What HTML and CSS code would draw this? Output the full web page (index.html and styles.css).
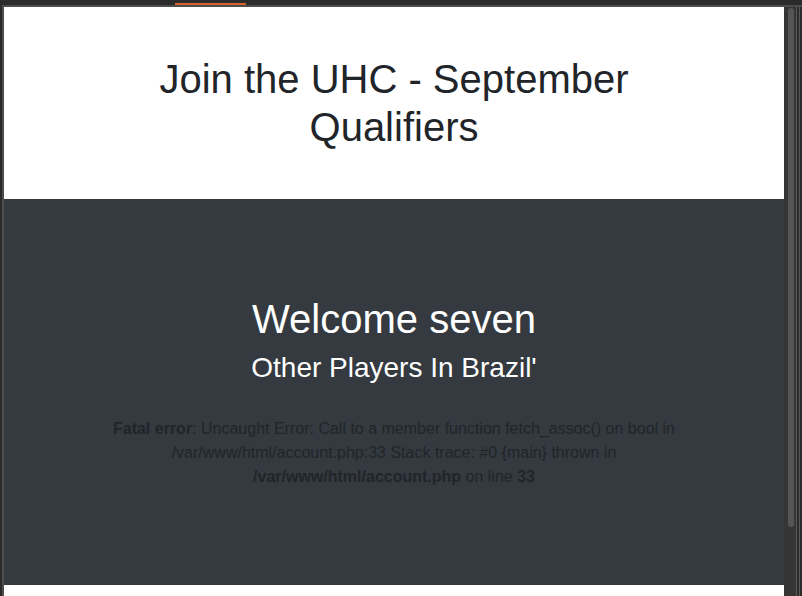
FILE: index.html
```html
<!DOCTYPE html>
<html>
<head>
<meta charset="utf-8">
<link rel="stylesheet" href="styles.css">
</head>
<body>
<div class="topbar"><span class="tab"></span></div>
<div class="window">
  <div class="page">
    <header class="hero">
      <h1 class="title">Join the UHC - September<br>Qualifiers</h1>
    </header>
    <section class="dark">
      <h1 class="welcome">Welcome seven</h1>
      <h3 class="sub">Other Players In Brazil'</h3>
      <div class="error"><br><b>Fatal error</b>: Uncaught Error: Call to a member function fetch_assoc() on bool in /var/www/html/account.php:33
Stack trace:
#0 {main}
  thrown in <b>/var/www/html/account.php</b> on line <b>33</b></div>
    </section>
    <section class="after"></section>
  </div>
  <div class="scrollbar"><div class="thumb"></div></div>
  <div class="edge"></div>
</div>
</body>
</html>
```
FILE: styles.css
```css
html, body {
  margin: 0;
  padding: 0;
  height: 100%;
  overflow: hidden;
}
body {
  background: #2b2b2b;
  font-family: "Liberation Sans", Arial, sans-serif;
  display: flex;
  flex-direction: column;
}
.topbar {
  height: 5px;
  flex: none;
}
.tab {
  display: block;
  margin: 3px 0 0 175px;
  width: 71px;
  height: 2px;
  background: #d9622b;
}
.window {
  flex: 1;
  display: flex;
  margin-left: 2px;
  border-top: 2px solid #4c4c4c;
  border-left: 2px solid #4c4c4c;
  min-height: 0;
}
.page {
  width: 780px;
  flex: none;
  overflow: hidden;
  background: #fff;
}
.hero {
  padding: 48px 0;
  text-align: center;
  background: #fff;
}
.title {
  margin: 0;
  font-size: 40px;
  line-height: 48px;
  font-weight: 400;
  color: #212529;
}
.dark {
  background: #343a40;
  padding: 96px 0;
  text-align: center;
  color: #fff;
}
.welcome {
  margin: 0 0 8px;
  font-size: 40px;
  line-height: 48px;
  font-weight: 400;
}
.sub {
  margin: 0 0 8px;
  font-size: 28px;
  line-height: 33.6px;
  font-weight: 400;
}
.error {
  width: 600px;
  margin: 0 auto;
  font-size: 16px;
  line-height: 24px;
  color: #212529;
}
.after {
  height: 40px;
  background: #fff;
}
.scrollbar {
  width: 12px;
  flex: none;
  background: #353535;
  padding: 1px 2px 0 4px;
  box-sizing: border-box;
}
.thumb {
  height: 519px;
  background: #555;
  border-radius: 3px;
}
.edge {
  flex: 1;
  border-left: 1px solid #5a5a5a;
  position: relative;
  background: #2b2b2b;
}
.edge::after {
  content: "";
  display: block;
  margin-left: 2px;
  width: 1px;
  height: 100%;
  background: #5a5a5a;
}
```
